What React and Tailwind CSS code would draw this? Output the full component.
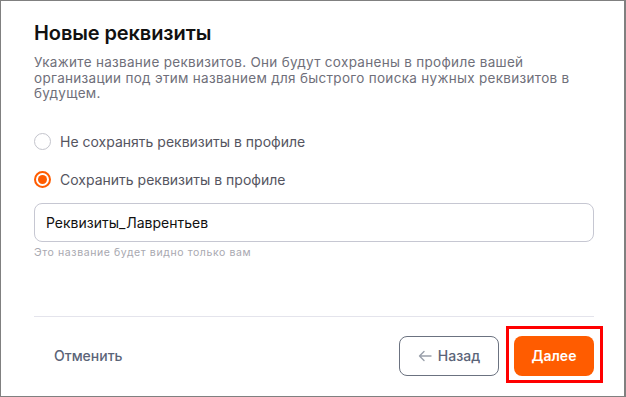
import React from "react";

export default function App() {
  return (
    <div
      className="w-[626px] h-[397px] bg-white border border-r-2 border-[#808080] flex flex-col pl-[33px] pr-[30px]"
      style={{ fontFamily: "Inter, 'Noto Sans', sans-serif" }}
    >
      <h1 className="mt-[18px] text-[20px] leading-[28px] font-semibold text-[#111111] tracking-[-0.1px]">
        Новые реквизиты
      </h1>
      <p className="mt-[8px] text-[13.5px] leading-[15.5px] tracking-[0.3px] text-[#6f6f7a]">
        Укажите название реквизитов. Они будут сохранены в профиле вашей организации под этим названием для быстрого поиска нужных реквизитов в будущем.
      </p>

      <div className="mt-[30px] flex items-center gap-[9px]">
        <span className="w-[17px] h-[17px] rounded-full border-[1.5px] border-[#c3c4cc] bg-white" />
        <span className="text-[14px] leading-[20px] text-[#55555f]">Не сохранять реквизиты в профиле</span>
      </div>
      <div className="mt-[18px] flex items-center gap-[9px]">
        <span className="w-[17px] h-[17px] rounded-full border-[2px] border-[#ff5c00] bg-white flex items-center justify-center">
          <span className="w-[9px] h-[9px] rounded-full bg-[#ff5c00]" />
        </span>
        <span className="text-[14px] leading-[20px] text-[#55555f]">Сохранить реквизиты в профиле</span>
      </div>

      <div className="mt-[13px] h-[39px] rounded-[8px] border border-[#c6c7d2] flex items-center px-[11px]">
        <span className="text-[14px] text-[#111111]">Реквизиты_Лаврентьев</span>
      </div>
      <div className="mt-[4px] text-[10.5px] leading-[14px] tracking-[0.6px] text-[#a8a8b0]">Это название будет видно только вам</div>

      <div className="mt-[56px] h-px bg-[#e4e4ec]" />

      <div className="mt-[19px] flex items-center">
        <button className="ml-[20px] text-[14px] font-medium text-[#5b6478]">Отменить</button>
        <div className="ml-auto flex items-center gap-[15px]">
          <button className="w-[100px] h-[40px] rounded-[8px] border border-[#6b7280] flex items-center justify-center gap-[6px] text-[14px] font-medium text-[#5b6478]">
            <svg width="14" height="12" viewBox="0 0 14 12" fill="none" stroke="#9aa0ab" strokeWidth="1.4" strokeLinecap="round" strokeLinejoin="round">
              <path d="M13 6H1.5M6 1.5L1.5 6 6 10.5" />
            </svg>
            Назад
          </button>
          <div className="relative">
            <button className="w-[80px] h-[40px] rounded-[8px] bg-[#ff5c00] text-white text-[14px] font-semibold flex items-center justify-center">
              Далее
            </button>
            <span className="absolute -top-[10px] -bottom-[7px] -left-[8px] -right-[9px] border-[3px] border-[#ff0000] pointer-events-none" />
          </div>
        </div>
      </div>
    </div>
  );
}
